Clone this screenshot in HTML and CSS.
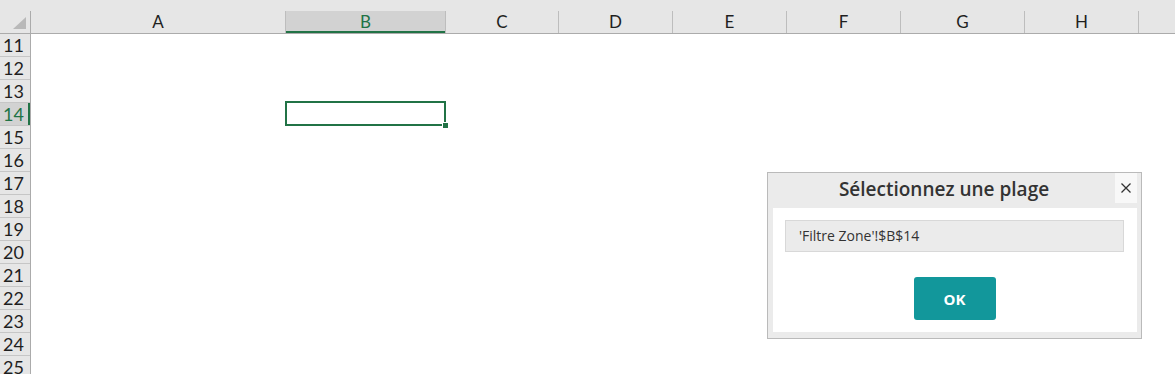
FILE: index.html
```html
<!DOCTYPE html>
<html lang="fr">
<head>
    <meta charset="UTF-8">
    <meta name="viewport" content="width=device-width, initial-scale=1.0">
    <title>Filtre Zone</title>
    <link rel="stylesheet" href="styles.css">
</head>
<body>

    <div class="sheet">
        <div class="col-heads">
            <div class="corner">
                <svg width="30" height="22" viewBox="0 0 30 22"><polygon points="13,18 26,6 26,18" fill="#b9b9b9"/></svg>
            </div>
            <div class="col-head col-a">A</div>
            <div class="col-head col-b selected">B</div>
            <div class="col-head col-c">C</div>
            <div class="col-head col-d">D</div>
            <div class="col-head col-e">E</div>
            <div class="col-head col-f">F</div>
            <div class="col-head col-g">G</div>
            <div class="col-head col-h">H</div>
            <div class="col-head col-rest"></div>
        </div>

        <div class="grid">
            <div class="row-heads">
                <div class="row-head">11</div>
                <div class="row-head">12</div>
                <div class="row-head">13</div>
                <div class="row-head selected">14</div>
                <div class="row-head">15</div>
                <div class="row-head">16</div>
                <div class="row-head">17</div>
                <div class="row-head">18</div>
                <div class="row-head">19</div>
                <div class="row-head">20</div>
                <div class="row-head">21</div>
                <div class="row-head">22</div>
                <div class="row-head">23</div>
                <div class="row-head">24</div>
                <div class="row-head">25</div>
            </div>
            <div class="cells"></div>
        </div>

        <!-- cellule active B14 -->
        <div class="active-cell"><span class="fill-handle"></span></div>

        <div class="dialog">
            <div class="dialog-header">
                <div class="dialog-title">Sélectionnez une plage</div>
                <button class="dialog-close" aria-label="Fermer">
                    <svg width="10" height="10" viewBox="0 0 10 10"><path d="M0.5 0.5 L9.5 9.5 M9.5 0.5 L0.5 9.5" stroke="#333" stroke-width="1.3"/></svg>
                </button>
            </div>
            <div class="dialog-body">
                <div class="range-input">'Filtre Zone'!$B$14</div>
                <button class="ok-button">OK</button>
            </div>
        </div>
    </div>

</body>
</html>
```

FILE: styles.css
```css
body {
    margin: 0;
    font-family: Lato, "Open Sans", sans-serif;
    background: #fff;
    overflow: hidden;
}
.sheet {
    position: relative;
    width: 1175px;
    height: 374px;
    overflow: hidden;
}
.col-heads {
    display: flex;
    height: 34px;
    padding-top: 11px;
    box-sizing: border-box;
    background: #e6e6e6;
    border-bottom: 1px solid #ababab;
}
.corner {
    width: 31px;
    flex: none;
    border-right: 1px solid #ababab;
    box-sizing: border-box;
}
.corner svg {
    display: block;
}
.col-head {
    flex: none;
    box-sizing: border-box;
    border-right: 1px solid #bdbdbd;
    text-align: center;
    font-size: 17px;
    line-height: 22px;
    color: #1f1f1f;
}
.col-head.selected {
    background: #d2d2d2;
    color: #217346;
    box-shadow: inset 0 -2px 0 #217346;
}
.col-a { width: 255px; }
.col-b { width: 160px; }
.col-c { width: 113px; }
.col-d { width: 114px; }
.col-e { width: 114px; }
.col-f { width: 114px; }
.col-g { width: 124px; }
.col-h { width: 114px; }
.col-rest { flex: 1; border-right: none; }

.grid {
    display: flex;
}
.row-heads {
    width: 31px;
    flex: none;
    background: #e6e6e6;
    border-right: 1px solid #ababab;
    box-sizing: border-box;
}
.row-head {
    height: 23px;
    box-sizing: border-box;
    border-bottom: 1px solid #c6c6c6;
    padding-left: 3px;
    font-size: 18px;
    line-height: 22px;
    color: #1f1f1f;
}
.row-head.selected {
    background: #d2d2d2;
    color: #217346;
    box-shadow: inset -2px 0 0 #217346;
}
.cells {
    flex: 1;
    background: #fff;
}

.active-cell {
    position: absolute;
    left: 285px;
    top: 101px;
    width: 161px;
    height: 25px;
    box-sizing: border-box;
    border: 2px solid #217346;
}
.fill-handle {
    position: absolute;
    right: -4px;
    bottom: -4px;
    width: 5px;
    height: 5px;
    background: #217346;
    border: 1px solid #fff;
    border-width: 1px 0 0 1px;
}

.dialog {
    position: absolute;
    left: 767px;
    top: 172px;
    width: 375px;
    height: 167px;
    box-sizing: border-box;
    border: 1px solid #bababa;
    background: #ebebeb;
    padding: 0 4px 6px 5px;
    display: flex;
    flex-direction: column;
    font-family: "Open Sans", sans-serif;
}
.dialog-header {
    height: 35px;
    display: flex;
    flex: none;
}
.dialog-title {
    flex: 1;
    text-align: center;
    font-size: 19px;
    font-weight: 600;
    color: #333;
    line-height: 32px;
}
.dialog-close {
    width: 22px;
    height: 30px;
    padding: 0;
    border: none;
    background: #f8f8f8;
    display: flex;
    align-items: center;
    justify-content: center;
    cursor: pointer;
}
.dialog-body {
    flex: 1;
    background: #fff;
    display: flex;
    flex-direction: column;
    align-items: center;
    padding: 12px 13px 0 12px;
}
.range-input {
    align-self: stretch;
    height: 32px;
    box-sizing: border-box;
    background: #ebebeb;
    border: 1px solid #d8d8d8;
    padding-left: 13px;
    font-size: 14px;
    line-height: 30px;
    color: #333;
}
.ok-button {
    margin-top: 25px;
    width: 82px;
    height: 43px;
    border: none;
    border-radius: 3px;
    background: #12979b;
    color: white;
    font-family: "Open Sans", sans-serif;
    font-weight: 700;
    font-size: 15px;
    cursor: pointer;
}
```
